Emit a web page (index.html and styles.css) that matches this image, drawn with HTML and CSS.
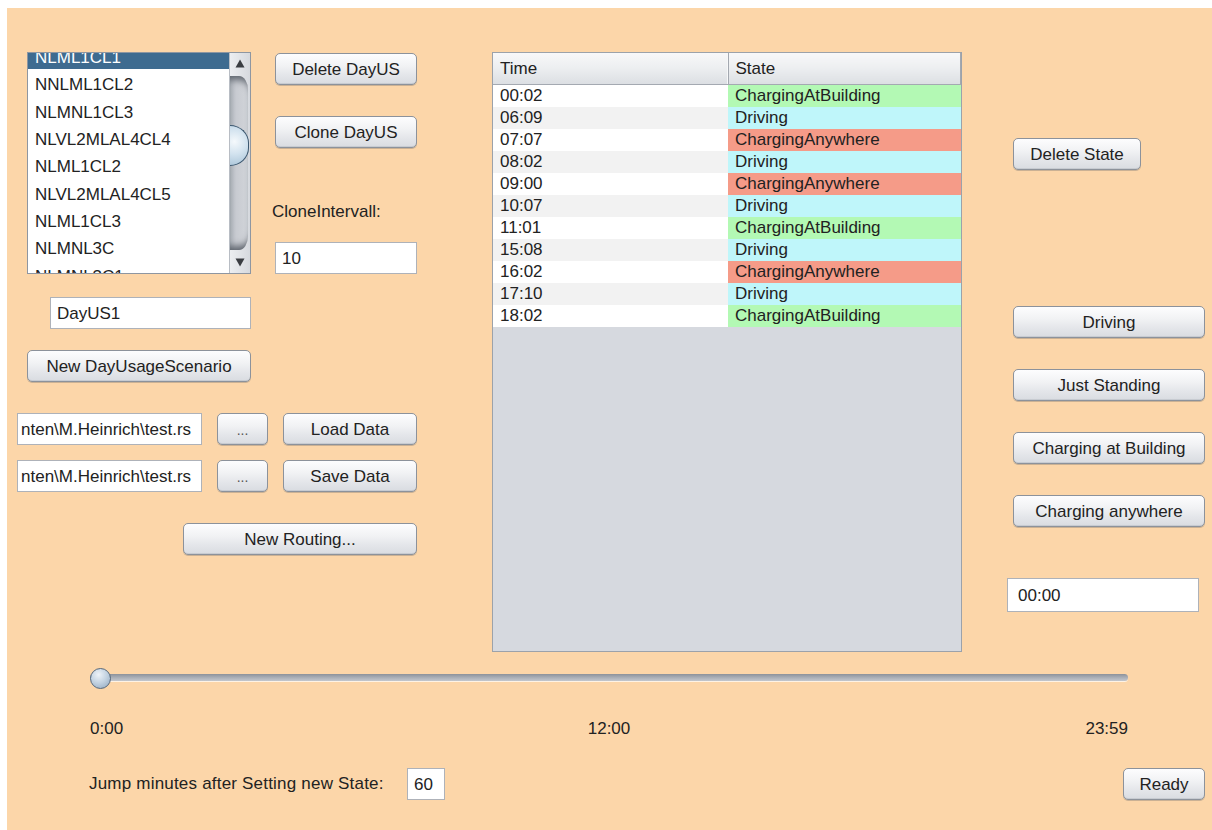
FILE: index.html
```html
<!DOCTYPE html>
<html lang="en">
<head>
<meta charset="utf-8">
<title>Day Usage Scenario Editor</title>
<link rel="stylesheet" href="styles.css">
</head>
<body>
<div class="frame">
  <div class="top">
    <div class="left">
      <div class="list-row">
        <div class="list">
          <ul class="items">
            <li class="sel">NLML1CL1</li>
            <li>NNLML1CL2</li>
            <li>NLMNL1CL3</li>
            <li>NLVL2MLAL4CL4</li>
            <li>NLML1CL2</li>
            <li>NLVL2MLAL4CL5</li>
            <li>NLML1CL3</li>
            <li>NLMNL3C</li>
            <li>NLMNL3C1</li>
          </ul>
          <div class="vscroll">
            <div class="arrow"><svg width="10" height="9" viewBox="0 0 10 9"><path d="M5 0.5 L9.5 8.5 L0.5 8.5 Z" fill="#3a3d42"/></svg></div>
            <div class="track"><div class="thumb"></div></div>
            <div class="arrow"><svg width="10" height="9" viewBox="0 0 10 9"><path d="M0.5 0.5 L9.5 0.5 L5 8.5 Z" fill="#3a3d42"/></svg></div>
          </div>
        </div>
        <div class="list-actions">
          <button class="btn">Delete DayUS</button>
          <button class="btn clone">Clone DayUS</button>
          <div class="label interval-label">CloneIntervall:</div>
          <div class="field interval">10</div>
        </div>
      </div>
      <div class="field name-field">DayUS1</div>
      <button class="btn new-scenario">New DayUsageScenario</button>
      <div class="file-row">
        <div class="field path">nten\M.Heinrich\test.rs</div>
        <button class="btn dots">...</button>
        <button class="btn file-btn">Load Data</button>
      </div>
      <div class="file-row second">
        <div class="field path">nten\M.Heinrich\test.rs</div>
        <button class="btn dots">...</button>
        <button class="btn file-btn">Save Data</button>
      </div>
      <button class="btn routing">New Routing...</button>
    </div>

    <div class="table-wrap">
      <table class="states">
        <thead>
          <tr><th class="c-time">Time</th><th class="c-state">State</th></tr>
        </thead>
        <tbody>
          <tr><td>00:02</td><td class="st-building">ChargingAtBuilding</td></tr>
          <tr><td>06:09</td><td class="st-driving">Driving</td></tr>
          <tr><td>07:07</td><td class="st-anywhere">ChargingAnywhere</td></tr>
          <tr><td>08:02</td><td class="st-driving">Driving</td></tr>
          <tr><td>09:00</td><td class="st-anywhere">ChargingAnywhere</td></tr>
          <tr><td>10:07</td><td class="st-driving">Driving</td></tr>
          <tr><td>11:01</td><td class="st-building">ChargingAtBuilding</td></tr>
          <tr><td>15:08</td><td class="st-driving">Driving</td></tr>
          <tr><td>16:02</td><td class="st-anywhere">ChargingAnywhere</td></tr>
          <tr><td>17:10</td><td class="st-driving">Driving</td></tr>
          <tr><td>18:02</td><td class="st-building">ChargingAtBuilding</td></tr>
        </tbody>
      </table>
    </div>

    <div class="right">
      <button class="btn delete-state">Delete State</button>
      <button class="btn state-btn first">Driving</button>
      <button class="btn state-btn">Just Standing</button>
      <button class="btn state-btn">Charging at Building</button>
      <button class="btn state-btn">Charging anywhere</button>
      <div class="field time-field">00:00</div>
    </div>
  </div>

  <div class="bottom">
    <div class="slider">
      <div class="slider-track"></div>
      <div class="slider-thumb"></div>
    </div>
    <div class="scale">
      <span class="s-start">0:00</span>
      <span class="s-mid">12:00</span>
      <span class="s-end">23:59</span>
    </div>
    <div class="jump-row">
      <div class="label jump-label">Jump minutes after Setting new State:</div>
      <div class="field jump-field">60</div>
      <button class="btn ready">Ready</button>
    </div>
  </div>
</div>
</body>
</html>
```

FILE: styles.css
```css
* {
  box-sizing: border-box;
}

html, body {
  height: 100%;
}

body {
  margin: 0;
  padding: 8px 0 0 7px;
  background: #ffffff;
  font-family: "Liberation Sans", Arial, sans-serif;
  font-size: 17px;
  color: #222;
  overflow: hidden;
}

.frame {
  width: 1205px;
  height: 822px;
  background: #fcd6a9;
  padding-top: 44px;
}

.top {
  display: flex;
  align-items: flex-start;
  height: 600px;
}

/* ---------- common widgets ---------- */

.btn {
  display: block;
  height: 32px;
  padding: 1px 0 0;
  font: inherit;
  font-size: 17px;
  color: #222;
  text-align: center;
  border: 1px solid #8c929b;
  border-radius: 5px;
  background: linear-gradient(to bottom, #fdfdfe 0%, #f1f2f4 40%, #e4e6ea 70%, #d9dce1 100%);
  box-shadow: inset 0 -1px 0 #c7cbd1, 0 1px 0 rgba(110, 110, 110, 0.35);
  cursor: default;
}

.field {
  height: 32px;
  background: #fff;
  border: 1px solid #aeb2b9;
  padding-left: 6px;
  line-height: 31px;
  white-space: nowrap;
  overflow: hidden;
}

.label {
  line-height: 20px;
  white-space: nowrap;
}

/* ---------- left panel ---------- */

.left {
  width: 485px;
  flex: none;
}

.list-row {
  display: flex;
  align-items: flex-start;
  margin-left: 20px;
}

.list {
  width: 224px;
  height: 222px;
  border: 1px solid #8e96a1;
  display: flex;
  background: #fff;
}

.items {
  list-style: none;
  margin: 0;
  padding: 0;
  flex: 1;
  overflow: hidden;
}

.items li {
  height: 27.33px;
  line-height: 23.33px;
  padding: 4px 0 0 7px;
  white-space: nowrap;
}

.items li.sel {
  margin-top: -11px;
  background: #3e6b90;
  color: #fff;
}

.vscroll {
  width: 21px;
  flex: none;
  display: flex;
  flex-direction: column;
  border-left: 1px solid #b8bdc4;
  background: linear-gradient(to right, #eceef1, #d6d9de);
}

.arrow {
  height: 21px;
  display: flex;
  align-items: center;
  justify-content: center;
}

.track {
  flex: 1;
  margin: 2px 2px 2px 0;
  border-radius: 0 9px 9px 0 / 0 14px 14px 0;
  background: linear-gradient(to right, #aeb3ba 0%, #c8cbd1 35%, #d2d5da 100%);
  box-shadow: inset 0 9px 7px -5px #5f656e, inset 0 -9px 7px -5px #5f656e;
}

.thumb {
  margin-top: 49px;
  width: 19px;
  height: 41px;
  border: 1.5px solid #3c5870;
  border-left: none;
  border-radius: 0 21px 21px 0 / 0 20px 20px 0;
  background: radial-gradient(circle at 25% 40%, #f5f9fc 0%, #d3e3ef 45%, #a5c1d6 100%);
}

.list-actions {
  margin-left: 24px;
  width: 142px;
  padding-top: 1px;
  display: flex;
  flex-direction: column;
}

.list-actions .btn {
  width: 142px;
}

.list-actions .clone {
  margin-top: 31px;
}

.interval-label {
  margin-top: 54px;
  margin-left: -3px;
}

.interval {
  margin-top: 20px;
  width: 142px;
}

.name-field {
  margin-top: 23px;
  margin-left: 43px;
  width: 201px;
}

.new-scenario {
  margin-top: 21px;
  margin-left: 20px;
  width: 224px;
}

.file-row {
  display: flex;
  margin-top: 31px;
  margin-left: 10px;
}

.file-row.second {
  margin-top: 15px;
}

.path {
  width: 185px;
  padding-left: 3px;
}

.dots {
  width: 51px;
  margin-left: 15px;
  font-size: 14px;
  color: #555;
}

.file-btn {
  width: 134px;
  margin-left: 15px;
}

.routing {
  margin-top: 31px;
  margin-left: 176px;
  width: 234px;
}

/* ---------- state table ---------- */

.table-wrap {
  width: 470px;
  height: 600px;
  flex: none;
  border: 1px solid #9ca2aa;
  background: #d6d9df;
}

.states {
  width: 100%;
  border-collapse: collapse;
  table-layout: fixed;
}

.states th {
  height: 31px;
  padding: 1px 0 0 7px;
  text-align: left;
  font-weight: normal;
  border-bottom: 1px solid #a4a9b1;
  background: linear-gradient(to bottom, #f8f8f9 0%, #eceef0 50%, #dcdfe3 100%);
}

.states th.c-time {
  width: 235px;
  border-right: 1px solid #a3a8b0;
  box-shadow: inset -1px 0 0 #f7f8f9;
}

.states th.c-state {
  border-right: 1px solid #a3a8b0;
}

.states td {
  height: 22px;
  padding: 0 0 0 7px;
  line-height: 22px;
  white-space: nowrap;
  background: #fff;
}

.states tbody tr:nth-child(even) td {
  background: #f2f2f2;
}

.states tbody tr td.st-building {
  background: #b3f9b4;
}

.states tbody tr td.st-driving {
  background: #bff6fa;
}

.states tbody tr td.st-anywhere {
  background: #f59b88;
}

/* ---------- right column ---------- */

.right {
  margin-left: 45px;
  display: flex;
  flex-direction: column;
}

.delete-state {
  margin-top: 86px;
  margin-left: 6px;
  width: 128px;
}

.state-btn {
  margin-top: 31px;
  margin-left: 6px;
  width: 192px;
}

.state-btn.first {
  margin-top: 136px;
}

.time-field {
  margin-top: 51px;
  width: 192px;
  height: 34px;
  line-height: 33px;
  padding-left: 10px;
}

/* ---------- bottom: time slider and controls ---------- */

.slider {
  position: relative;
  margin-top: 16px;
  margin-left: 83px;
  width: 1038px;
  height: 20px;
  padding-top: 6px;
}

.slider-track {
  height: 7px;
  border-radius: 4px;
  background: linear-gradient(to bottom, #8c929b 0%, #a9aeb6 50%, #c3c7cd 100%);
  box-shadow: 0 1px 0 rgba(255, 255, 255, 0.7);
}

.slider-thumb {
  position: absolute;
  left: 0;
  top: 0;
  width: 21px;
  height: 21px;
  border-radius: 50%;
  border: 1px solid #56687b;
  background: radial-gradient(circle at 40% 30%, #eef3f8 0%, #c5d4e2 45%, #8ea6bd 100%);
}

.scale {
  display: grid;
  grid-template-columns: 1fr auto 1fr;
  margin-top: 31px;
  margin-left: 83px;
  width: 1038px;
  line-height: 20px;
}

.s-end {
  text-align: right;
}

.jump-row {
  display: flex;
  align-items: center;
  margin-top: 29px;
  margin-left: 82px;
  margin-right: 7px;
}

.jump-label {
  width: 318px;
  letter-spacing: 0.2px;
}

.jump-field {
  width: 38px;
  padding-left: 6px;
}

.ready {
  margin-left: auto;
  width: 82px;
}
```
